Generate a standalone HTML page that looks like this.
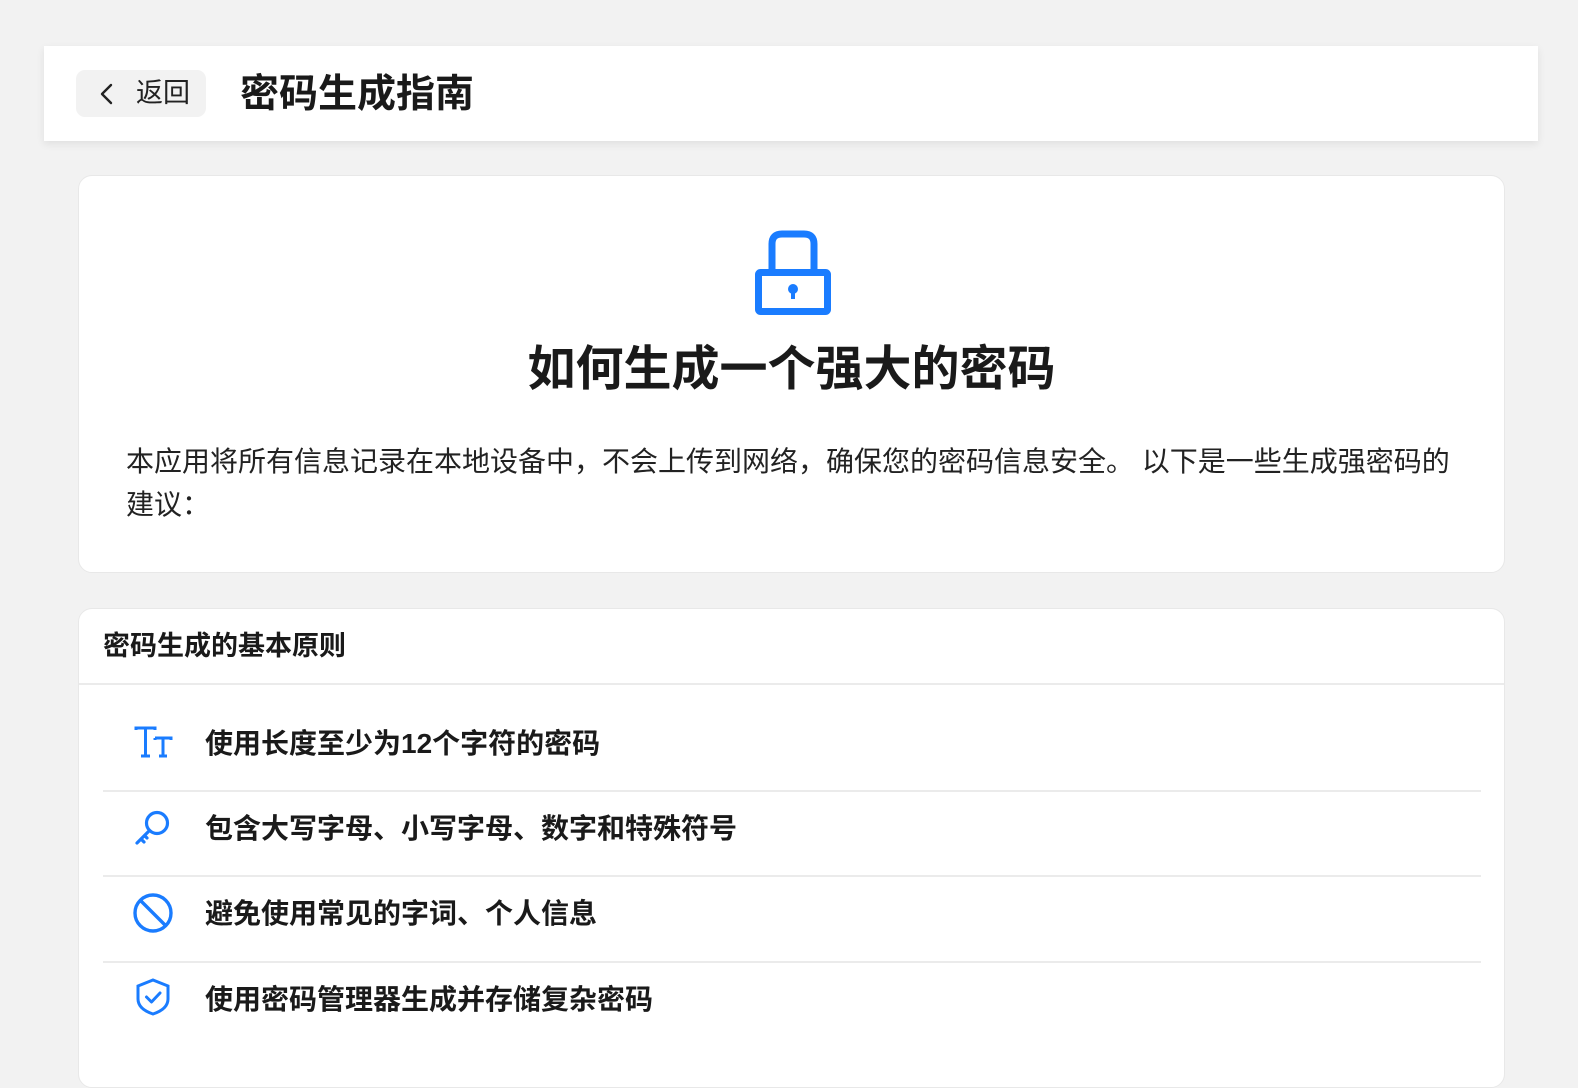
<!DOCTYPE html>
<html><head><meta charset="utf-8"><style>
*{margin:0;padding:0;box-sizing:border-box}
body{width:1578px;height:1074px;background:#f2f2f2;font-family:"Liberation Sans","Noto Sans CJK SC",sans-serif;color:#1a1a1a;overflow:hidden;position:relative}
.hdr{position:absolute;left:44px;top:46px;width:1494px;height:95px;background:#fff;box-shadow:0 3px 8px rgba(0,0,0,.08)}
.back{position:absolute;left:32px;top:24px;width:130px;height:47px;background:#f2f2f2;border-radius:9px;font-size:27px;line-height:47px;padding-left:60px;color:#222}
.back svg{position:absolute;left:20px;top:12px}
.ttl{position:absolute;left:196px;top:21px;font-size:39px;font-weight:bold;line-height:56px}
.card{position:absolute;left:78px;width:1427px;background:#fff;border-radius:14px;border:1px solid #e8e8e8}
.c1{top:175px;height:398px}
.c2{top:608px;height:480px}
.h1{position:absolute;left:0;width:100%;top:162px;text-align:center;font-size:48px;font-weight:bold;line-height:64px}
.p{position:absolute;left:47px;top:264px;width:1330px;font-size:28px;line-height:43px;color:#222}
.sh{position:absolute;left:24px;top:17px;font-size:27px;font-weight:bold;line-height:40px}
.line{position:absolute;height:2px;background:#ebebeb}
.it{position:absolute;left:126px;font-size:28px;font-weight:bold;line-height:40px}
.ic{position:absolute;left:54px}
</style></head><body>
<div class="hdr">
<div class="back"><svg width="22" height="24" viewBox="0 0 22 24"><path d="M15 3 L6 12 L15 21" fill="none" stroke="#222" stroke-width="2.4" stroke-linecap="round" stroke-linejoin="round"/></svg>返回</div>
<div class="ttl">密码生成指南</div>
</div>
<div class="card c1">
<svg style="position:absolute;left:673px;top:51px" width="82" height="92" viewBox="0 0 82 92"><path d="M20 43 V17 Q20 7 30 7 H52 Q62 7 62 17 V43" fill="none" stroke="#1a7cff" stroke-width="7"/><rect x="6.5" y="45.5" width="69" height="39" rx="2" fill="none" stroke="#1a7cff" stroke-width="7"/><circle cx="41" cy="62" r="5" fill="#1a7cff"/><rect x="39" y="63" width="4" height="9" fill="#1a7cff"/></svg>
<div class="h1">如何生成一个强大的密码</div>
<div class="p">本应用将所有信息记录在本地设备中，不会上传到网络，确保您的密码信息安全。 以下是一些生成强密码的建议：</div>
</div>
<div class="card c2">
<div class="sh">密码生成的基本原则</div>
<div class="line" style="left:0;width:100%;top:74px"></div>
<div class="it" style="top:115px">使用长度至少为12个字符的密码</div>
<div class="line" style="left:24px;width:1378px;top:181px"></div>
<div class="it" style="top:200px">包含大写字母、小写字母、数字和特殊符号</div>
<div class="line" style="left:24px;width:1378px;top:266px"></div>
<div class="it" style="top:285px">避免使用常见的字词、个人信息</div>
<div class="line" style="left:24px;width:1378px;top:352px"></div>
<div class="it" style="top:371px">使用密码管理器生成并存储复杂密码</div>
<svg class="ic" style="top:117px" width="42" height="36" viewBox="0 0 42 36"><path d="M3 4 V2 H22 V4 M12.5 2 V30 M8 30 H17 M22 12 H38 V14 M22 12 V14 M30 12 V30 M26 30 H34" fill="none" stroke="#1a7cff" stroke-width="3"/></svg>
<svg class="ic" style="top:198px" width="42" height="40" viewBox="0 0 42 40"><circle cx="24" cy="16" r="10.5" fill="none" stroke="#1a7cff" stroke-width="3.2"/><path d="M16.5 23.5 L4 36 M8 32 L11 35 M11.5 28.5 L14 31" fill="none" stroke="#1a7cff" stroke-width="3.2" stroke-linecap="round"/></svg>
<svg class="ic" style="top:283px" width="42" height="42" viewBox="0 0 42 42"><circle cx="20" cy="21" r="18" fill="none" stroke="#1a7cff" stroke-width="3.4"/><path d="M7.5 8.5 L32.5 33.5" stroke="#1a7cff" stroke-width="3.4"/></svg>
<svg class="ic" style="top:368px" width="42" height="40" viewBox="0 0 42 40"><path d="M20 3 L35 9 V22 Q35 32 20 37 Q5 32 5 22 V9 Z" fill="none" stroke="#1a7cff" stroke-width="3"/><path d="M13.5 20 L18.5 25 L27 16" fill="none" stroke="#1a7cff" stroke-width="3" stroke-linecap="round" stroke-linejoin="round"/></svg>
</div>
</body></html>
